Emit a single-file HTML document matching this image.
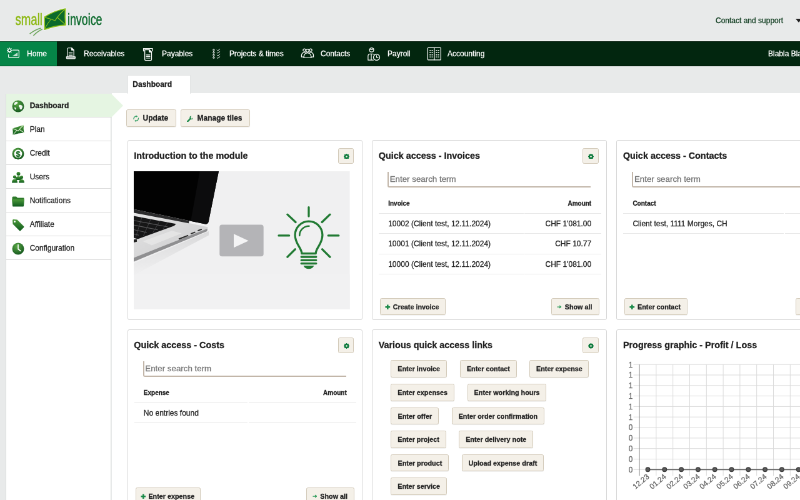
<!DOCTYPE html>
<html lang="en">
<head>
<meta charset="utf-8">
<title>smallinvoice - Dashboard</title>
<style>
html,body{margin:0;padding:0;}
body{width:800px;height:500px;overflow:hidden;background:#e8eaea;position:relative;font-family:"Liberation Sans",Arial,sans-serif;}
#stage{will-change:transform;-webkit-text-stroke:0.3px;position:absolute;left:0;top:0;width:1280px;height:800px;transform:scale(.625);transform-origin:0 0;overflow:hidden;background:#e8eaea;font-size:12px;color:#222;}
#stage *{box-sizing:border-box;}
.abs{position:absolute;}
/* header */
#support{position:absolute;left:1145px;top:25.7px;font-size:12px;color:#0d3a1d;white-space:nowrap;}
#caret{position:absolute;left:1272.5px;top:29.5px;width:0;height:0;border-left:5px solid transparent;border-right:5px solid transparent;border-top:6px solid #222;}
/* nav */
#nav{position:absolute;left:0;top:65.5px;width:1280px;height:40px;background:#02260f;box-shadow:0 -1px 0 #fff;}
#nav:after{content:"";box-sizing:border-box;position:absolute;left:0;top:0;width:100%;height:40px;border-top:1px solid rgba(0,10,0,.45);border-bottom:1px solid rgba(0,10,0,.4);pointer-events:none;}
#nav .it{position:absolute;top:0;height:40px;line-height:40px;color:#fff;font-size:12px;white-space:nowrap;}
#nav .it svg{position:absolute;top:9px;}
#nav .home{left:0;width:91px;background:#058547;}
#nav .it span{position:absolute;left:43px;top:0;}
/* sidebar */
#side{position:absolute;left:9.2px;top:150.2px;width:169.3px;height:660px;background:#fff;border:1px solid #d9dcdb;border-top:none;}
#side .row{position:absolute;left:0;width:167.3px;height:38px;border-bottom:1px solid #dadada;line-height:39.4px;font-size:12px;color:#222;}
#side .row span{position:absolute;left:37.5px;top:0;}
#side .row svg{position:absolute;left:7.5px;top:8.5px;}
#side .sel{background:#e5f5e2;font-weight:bold;width:169px;}
#arrow{position:absolute;left:178px;top:150.2px;width:0;height:0;border-top:19px solid transparent;border-bottom:19px solid transparent;border-left:19px solid #e5f5e2;}
/* main */
#main{position:absolute;left:178.5px;top:149px;width:1110px;height:660px;background:#fff;}
#tab{position:absolute;left:204px;top:119.500px;width:100.500px;height:30px;background:#fff;font-weight:bold;font-size:12px;line-height:29.500px;padding-left:7.300px;border:1px solid #e2e4e4;border-bottom:none;}
.btn{position:absolute;height:27.5px;background:#f4f0e8;border:1px solid #d2c9b8;border-radius:2.500px;font-weight:bold;font-size:10.8px;line-height:27px;white-space:nowrap;color:#222;box-shadow:0 1px 1px rgba(0,0,0,.06);}
.btn svg{position:absolute;}
.btn span{position:absolute;top:0;}
.tile{position:absolute;width:376px;height:287.500px;border:1px solid #d6d6d6;border-radius:3px;background:#fff;}
.tile h3{position:absolute;left:9.5px;top:16px;margin:0;font-size:14.4px;font-weight:bold;line-height:17px;white-space:nowrap;color:#222;}
.gear{position:absolute;left:336px;top:11.500px;width:25.600px;height:25.400px;background:#f4f0e8;border:1px solid #d2c9b8;border-radius:2.500px;}
.search{position:absolute;left:24px;top:50px;width:325px;height:25.2px;border-left:2px solid #c2b6a9;border-bottom:2px solid #c2b6a9;border-bottom-left-radius:3px;font-size:13.33px;color:#757575;line-height:23.500px;padding-left:1.500px;white-space:nowrap;}
.th{position:absolute;font-size:10px;font-weight:bold;top:95px;line-height:12px;}
.hl{position:absolute;height:1px;background:#e6e6e6;}
.td{position:absolute;font-size:12px;line-height:14px;white-space:nowrap;}
.r{text-align:right;}
.yl{position:absolute;width:20px;text-align:right;font-size:12px;line-height:14px;color:#666;}
.xl{position:absolute;width:40px;text-align:right;font-size:12px;line-height:14px;color:#666;white-space:nowrap;transform-origin:100% 50%;transform:rotate(-40deg);}
</style>
</head>
<body>
<div id="stage">
<!-- HEADER -->
<svg class="abs" style="left:0;top:0" width="200" height="65" viewBox="0 0 200 65">
<g font-family="Liberation Sans, Arial, sans-serif" font-size="26.500" stroke-width=".5">
<text x="24.500" y="40.300" fill="#8cb811" stroke="#8cb811" textLength="43.500" lengthAdjust="spacingAndGlyphs">small</text>
<text x="108" y="40.300" fill="#0b6a2c" stroke="#0b6a2c" textLength="55.500" lengthAdjust="spacingAndGlyphs">invoice</text>
</g>
<path d="M71.200,27.300 Q86,17.500 104.500,14 Q103.500,27 105,39.800 Q87,41 71.300,47.200 Z" fill="#fff" stroke="#fff" stroke-width="3.500" stroke-linejoin="round" opacity=".55"/>
<path d="M71.200,27.300 Q86,17.500 104.500,14 Q103.500,27 105,39.800 Q87,41 71.300,47.200 Z" fill="#0b6a2c" stroke="#8cc01a" stroke-width="1.700" stroke-linejoin="round"/>
<path d="M71.500,27.800 Q80,29.500 88,33 Q95,22 104.300,14.500" fill="none" stroke="#8cc01a" stroke-width="1.300"/>
<path d="M71.500,46.800 Q76,37 82,30.500 M104.800,39.500 Q98,33.500 92,28" fill="none" stroke="#8cc01a" stroke-width="1.100"/>
<path d="M47.600,54.200 Q56,47.500 65.500,45" fill="none" stroke="#4f9438" stroke-width="1.700" opacity=".8"/>
<path d="M53.400,57 Q60,50 67.700,46.700" fill="none" stroke="#4f9438" stroke-width="1.700" opacity=".8"/>
</svg>
<div id="support">Contact and support</div><div id="caret"></div>
<!-- NAV -->
<div id="nav"><div class="it home" style="left:0px;width:91px"><svg style="left:10.500px;top:10.300px" width="21.600" height="19.800" viewBox="0 0 24 22"><g stroke="#fff" fill="none" stroke-width="1.3" stroke-linecap="round" stroke-linejoin="round"><circle cx="4.700" cy="5" r="2.700" stroke-width="1.500"/><circle cx="4.700" cy="5" r="0.900" fill="#03260f" stroke="none"/><path d="M4.700,0.500v1.200M4.700,8.300v1.200M0.200,5h1.200M8,5h1.200M1.500,1.800l.9,.9M7,7.300l.9,.9M1.500,8.200l.9,-.9M7,2.700l.9,-.9" stroke-width="1.200"/><path d="M10.500,4.500h9.500q1.500,0 1.500,1.500v10.500q0,1.500 -1.500,1.500h-15.500q-1.500,0 -1.500,-1.500v-4"/><path d="M9.500,15.500h9.500v-6.500z" fill="#fff" stroke="none" opacity=".75"/></g></svg><span>Home</span></div><div class="it " style="left:91px;width:125px"><svg style="left:13.700px;top:9.700px" width="17.500" height="21" viewBox="0 0 20 24"><g stroke="#fff" fill="none" stroke-width="1.3" stroke-linecap="round" stroke-linejoin="round" stroke-width="1.450"><path d="M3.500,18v-14.500q0,-1.500 1.500,-1.500h6l4,4v12"/><path d="M11,2v4h4z" fill="#fff"/><path d="M6,10.500h6.500M6,13h6.500M6,15.500h6.500" stroke-width="1.200"/><path d="M1.500,18h16v2.500q0,1 -1,1h-14q-1,0 -1,-1z" fill="#fff" fill-opacity=".6"/></g></svg><span>Receivables</span></div><div class="it " style="left:216px;width:108px"><svg style="left:11.400px;top:9px" width="20.600" height="24.700" viewBox="0 0 20 24"><g stroke="#fff" fill="none" stroke-width="1.3" stroke-linecap="round" stroke-linejoin="round"><path d="M2.500,6.500v-4h14v4" /><path d="M4.500,4.500v15q0,1.500 1.500,1.500h7.500q1.500,0 1.500,-1.500v-11.500l-3.500,-3.500z"/><path d="M11.500,4.500v3.500h3.500z" fill="#fff"/><path d="M7,12.500h5.500M7,15h5.500M7,17.500h5.500" stroke-width="1.100"/></g></svg><span>Payables</span></div><div class="it " style="left:324px;width:146px"><svg style="left:15.500px;top:12px" width="14" height="16.500" viewBox="0 0 14 16.500"><g stroke="#fff" fill="none" stroke-linecap="round" stroke-linejoin="round" stroke-width=".9"><rect x=".7" y=".7" width="2.600" height="2.300" rx=".8"/><rect x=".7" y="4.800" width="2.600" height="2.300" rx=".8"/><rect x=".7" y="8.900" width="2.600" height="2.300" rx=".8"/><rect x=".7" y="13" width="2.600" height="2.300" rx=".8"/><path d="M7.200,2l1.200,1.200l3.400,-2.800M7.200,6.100l1.200,1.200l3.400,-2.800M7.200,10.200l1.200,1.200l3.400,-2.800M7.200,14.300l1.200,1.200l3.400,-2.800" stroke-width="1"/></g></svg><span>Projects &amp; times</span></div><div class="it " style="left:470px;width:107px"><svg style="left:11px;top:10.500px" width="22" height="18.400" viewBox="0 0 24 20"><g stroke="#fff" fill="none" stroke-width="1.3" stroke-linecap="round" stroke-linejoin="round" stroke-width="1.200"><circle cx="6.500" cy="4.500" r="2.300"/><circle cx="17.500" cy="4.500" r="2.300"/><path d="M1.500,16.500q-0.500,-8 5,-8q2,0 3,1.500M22.500,16.500q0.500,-8 -5,-8q-2,0 -3,1.500M1.500,16.500h4M22.500,16.500h-4"/><circle cx="12" cy="5.500" r="2.600"/><path d="M5.500,18q0,-8.500 6.500,-8.500q6.500,0 6.500,8.500z"/></g></svg><span>Contacts</span></div><div class="it " style="left:577px;width:96px"><svg style="left:10.200px;top:9.300px" width="22.600" height="23.400" viewBox="0 0 24 26" preserveAspectRatio="none"><g stroke="#fff" fill="none" stroke-width="1.3" stroke-linecap="round" stroke-linejoin="round" stroke-width="1.200"><circle cx="8" cy="5.500" r="3.600"/><path d="M4.500,4.500q3.500,1 7,-1"/><path d="M2,23.500v-7q0,-4 4,-4h3.500q2,0 3,1.500M2,23.500h9M7.500,12.500v11"/><circle cx="16.500" cy="18.500" r="5.300"/><path d="M16.500,15.500v3.200h2.600"/></g></svg><span>Payroll</span></div><div class="it " style="left:673px;width:120px"><svg style="left:9.600px;top:8.600px" width="24.700" height="24.700" viewBox="0 0 26 26"><g stroke="#fff" fill="none" stroke-width="1.3" stroke-linecap="round" stroke-linejoin="round" stroke-width="1.200"><rect x="1.500" y="2.500" width="22" height="20.500" rx="1"/><path d="M12.500,2.500v20.500"/><g stroke-width="1.500" stroke-linecap="butt"><path d="M4.500,7h2.200M8,7h2.200M4.500,10.500h2.200M8,10.500h2.200M4.500,14.500h2.200M8,14.500h2.200M4.500,18h2.200M8,18h2.200M15,7h2.200M18.500,7h2.200M15,10.500h2.200M18.500,10.500h2.200M15,14.500h2.200M18.500,14.500h2.200M15,18h2.200M18.500,18h2.200"/></g></g></svg><span>Accounting</span></div><div class="it" style="left:1229px;width:60px"><span style="left:0">Blabla Blabla</span></div></div>
<!-- MAIN -->
<div id="main"></div>
<div id="tab">Dashboard</div>
<svg width="0" height="0" style="position:absolute"><defs>
<linearGradient id="gg" x1="0" y1="0" x2="0" y2="1"><stop offset="0" stop-color="#4c9a3a"/><stop offset="1" stop-color="#0f5a1e"/></linearGradient>
<radialGradient id="gr" cx=".4" cy=".3" r=".8"><stop offset="0" stop-color="#5aa845"/><stop offset="1" stop-color="#0d4f1a"/></radialGradient>
</defs></svg><div id="side"><div class="row sel" style="top:0px"><svg width="22" height="22" viewBox="0 0 22 22"><circle cx="11" cy="11" r="9.500" fill="url(#gr)"/><path d="M6,4.500q3,-1.500 4.500,0.500q-0.500,2 -2.500,2.500q-1,2 -3,1.500q-1,-2.500 1,-4.500zM12.500,9q3,-1 5.500,1.500q0.500,3 -1.500,5.500q-2.500,1 -3,-1.500q0.500,-2 -1.500,-3q-0.500,-1.500 0.500,-2.500zM5,12.500q2,0 3,2q0,2 -1.500,2q-1.500,-1.500 -1.500,-4z" fill="#fff" opacity=".92"/></svg><span>Dashboard</span></div><div class="row " style="top:38px"><svg width="22" height="22" viewBox="0 0 22 22"><path d="M2,8.500l18,-5.500q-1,6.500 0.500,12.500q-9,0 -18,3.500q0.500,-5.500 -0.500,-10.500z" fill="url(#gg)"/><path d="M2,8.500q5,1.500 9,4q4,-5.500 9,-9.500M2.500,19l6.500,-7.500M20.500,15.500l-7,-5" stroke="#dff0d0" stroke-width="1.100" fill="none"/></svg><span>Plan</span></div><div class="row " style="top:76px"><svg width="22" height="22" viewBox="0 0 22 22"><circle cx="11" cy="11" r="9.500" fill="url(#gr)"/><circle cx="11" cy="11" r="6.400" fill="#fff"/><text x="11" y="15.600" text-anchor="middle" font-family="Liberation Sans, Arial, sans-serif" font-weight="bold" font-size="12.500" fill="#1c6a26" stroke="#1c6a26" stroke-width=".4">$</text></svg><span>Credit</span></div><div class="row " style="top:114px"><svg width="22" height="22" viewBox="0 0 22 22"><g fill="url(#gg)"><circle cx="11.500" cy="5" r="3"/><path d="M6.500,15q0,-6 5,-6q5,0 5,6z"/><circle cx="5.500" cy="10" r="2.600"/><path d="M1,19.500q0,-6 4.500,-6q4.500,0 4.500,6z"/><circle cx="16.500" cy="10.500" r="2.600"/><path d="M12,19.500q0,-5.500 4.500,-5.500q4.500,0 4.500,5.500z"/></g></svg><span>Users</span></div><div class="row " style="top:152px"><svg width="22" height="22" viewBox="0 0 22 22"><path d="M1.500,5q0,-1.500 1.500,-1.500h5l2,2h9.500q1,0 1,1v2h-19z" fill="#2d7a2a"/><path d="M1,8h20l-1,10.500q0,1 -1,1h-16q-1,0 -1,-1z" fill="url(#gg)"/></svg><span>Notifications</span></div><div class="row " style="top:190px"><svg width="22" height="22" viewBox="0 0 22 22"><path d="M2,3.500q0,-1.500 1.500,-1.500l6,0.500l10.500,10.500q1,1 0,2l-5,5q-1,1 -2,0l-10.500,-10.500z" fill="url(#gg)"/><circle cx="5.500" cy="5.500" r="1.500" fill="#fff"/></svg><span>Affiliate</span></div><div class="row " style="top:228px"><svg width="22" height="22" viewBox="0 0 22 22"><circle cx="11" cy="11" r="9.500" fill="url(#gr)"/><path d="M11,4.500v7l4,3" stroke="#fff" stroke-width="1.600" fill="none" stroke-linecap="round"/></svg><span>Configuration</span></div></div>
<div id="arrow"></div>
<div class="btn" style="left:202px;top:175px;width:80px;font-size:12px"><svg style="left:8.500px;top:8px" width="11.500" height="11.500" viewBox="0 0 12 12"><g fill="none" stroke="#35a066" stroke-width="1.350"><path d="M2.200,7.300a3.900,3.900 0 0 1 4.300,-5"/><path d="M9.800,4.700a3.900,3.900 0 0 1 -4.300,5"/></g><path d="M5.800,0.300l3,2.100l-3.100,1.700z M6.200,11.700l-3,-2.100l3.100,-1.700z" fill="#35a066"/></svg><span style="left:25.500px">Update</span></div>
<div class="btn" style="left:289px;top:175px;width:110.500px;font-size:12px"><svg style="left:9px;top:8.500px" width="10.500" height="10.500" viewBox="0 0 12 12"><path d="M1.400,10.600l5,-5" stroke="#1c8a4a" stroke-width="2.800" stroke-linecap="round"/><path d="M8.300,0.600a3.200,3.200 0 1 0 3.100,3.100l-1.900,1.900l-1.900,-0.600l-0.600,-1.900z" fill="#1c8a4a"/></svg><span style="left:25.500px">Manage tiles</span></div>
<div class="tile" style="left:203.8px;top:224.3px"><h3>Introduction to the module</h3><div class="gear"><svg style="position:absolute;left:8px;top:8px" width="9" height="9" viewBox="0 0 10 10"><circle cx="5" cy="5" r="3" fill="none" stroke="#0c7a3c" stroke-width="2.600"/><g stroke="#0c7a3c" stroke-width="1.600"><path d="M5,0v10M0,5h10M1.460,1.460l7.080,7.080M8.540,1.460l-7.080,7.080"/></g><circle cx="5" cy="5" r="1.500" fill="#f4f0e8"/></svg></div><svg id="vid" style="position:absolute;left:9.4px;top:48.700px" width="345.600" height="221" viewBox="0 0 216 138.100" preserveAspectRatio="none">
<defs>
<linearGradient id="deck" x1="0" y1="0" x2="1" y2="1"><stop offset="0" stop-color="#e4e4e4"/><stop offset="1" stop-color="#c9c9cb"/></linearGradient>
<linearGradient id="shd" x1="0" y1="0" x2="0" y2="1"><stop offset="0" stop-color="#d9d9da"/><stop offset="1" stop-color="#f0f0f1"/></linearGradient>
</defs>
<rect width="216" height="138.100" fill="#f0f0f1"/>
<rect y="103" width="216" height="35.100" fill="#f1f1f2"/>
<path d="M0,92 L75,60 L75,64 L30,88 L0,104z" fill="url(#shd)"/>
<path d="M0,42 L56,52 L74,55.800 L73.500,59.300 L0,89.500z" fill="url(#deck)"/>
<path d="M0,86.500 L73.800,57.300 L73.300,60 L0,90.500z" fill="#8f8f91"/>
<path d="M0,44.700 L42.300,52.600 L40.500,54.500 L4,67.800 L0,66.500z" fill="#161617"/>
<path d="M0,49.200 L34,55.600 M0,53.800 L24,58.500 M0,58.400 L13,61.200 M0,62.800 L5,63.900" stroke="#5a5a5c" stroke-width=".7" fill="none"/>
<path d="M8,46.300 L2,66 M17,48 L9.500,65 M26,49.700 L19,61.500 M34,51.200 L29,58" stroke="#4a4a4c" stroke-width=".5" fill="none"/>
<path d="M0,68.200 L3,67.800 L3.200,70.500 L0,71.200z" fill="#222"/>
<path d="M9,70 L38,59.500 L48,62 L18,74z" fill="#e9e9ea" opacity=".7"/>
<path d="M45,67.800l9.500,-3.700 M57,62.600l4.500,-1.700 M64,59.500l4,-1.500" stroke="#2a2a2a" stroke-width="1.200"/>
<path d="M0,0 L85,0 L74.800,50.500 Q74,53.300 71.500,52.800 L55.500,49.500 L0,38z" fill="#020202"/>
<path d="M66,0 L85,0 L74.800,50.500 Q74,53.300 71.500,52.800 L57,49.800z" fill="#0c0c0d"/>
<path d="M0,38 L55.500,49.500 L55,52 L0,41.500z" fill="#2b2b2c"/>
<rect x="85.800" y="53.500" width="44" height="31.700" rx="2.500" fill="#b4b4b7"/>
<path d="M100,62.600 L100,76.400 L114.800,69.500z" fill="#f4f4f5"/>
<g fill="none" stroke="#217a33" stroke-width="2.050" stroke-linecap="round" transform="translate(0,.5)">
<path d="M168,81.800 C168,76 161.300,72.500 161.300,63.300 A13.700,13.700 0 1 1 188.700,63.300 C188.700,72.500 182,76 182,81.800 Z" stroke-linejoin="round"/>
<path d="M165.800,63.800 A9.300,9.300 0 0 1 175.300,54.300" stroke-width="1.600"/>
<path d="M167.600,85.100h14.800M167.600,88.400h14.800M167.600,91.700h14.800"/><path d="M170.500,94.300h9q-1,2.300 -4.500,2.300q-3.500,0 -4.500,-2.300z" fill="#217a33" stroke-width="1"/>
<path d="M175,35.500v9M145,63.800h10.400M194.500,63.800h10.400M153.700,42.700l8.200,7.700M196.200,42.700l-8,7.700M153.700,85.200l7.700,-7.700M196.200,85.200l-7.700,-7.700"/>
</g>
</svg></div>
<div class="tile" style="left:595.2px;top:224.3px"><h3>Quick access - Invoices</h3><div class="gear"><svg style="position:absolute;left:8px;top:8px" width="9" height="9" viewBox="0 0 10 10"><circle cx="5" cy="5" r="3" fill="none" stroke="#0c7a3c" stroke-width="2.600"/><g stroke="#0c7a3c" stroke-width="1.600"><path d="M5,0v10M0,5h10M1.460,1.460l7.080,7.080M8.540,1.460l-7.080,7.080"/></g><circle cx="5" cy="5" r="1.500" fill="#f4f0e8"/></svg></div><div class="search">Enter search term</div><div class="th" style="left:25px">Invoice</div><div class="th r" style="right:24px">Amount</div><div class="hl" style="left:10px;width:231.500px;top:115.5px"></div><div class="hl" style="left:243px;width:122.500px;top:115.5px"></div><div class="hl" style="left:10px;width:231.500px;top:148.0px"></div><div class="hl" style="left:243px;width:122.500px;top:148.0px"></div><div class="hl" style="left:10px;width:231.500px;top:180.5px"></div><div class="hl" style="left:243px;width:122.500px;top:180.5px"></div><div class="hl" style="left:10px;width:231.500px;top:213.0px"></div><div class="hl" style="left:243px;width:122.500px;top:213.0px"></div><div class="td" style="left:25px;top:125.7px">10002 (Client test, 12.11.2024)</div><div class="td r" style="right:24px;top:125.7px">CHF 1'081.00</div><div class="td" style="left:25px;top:158.2px">10001 (Client test, 12.11.2024)</div><div class="td r" style="right:24px;top:158.2px">CHF 10.77</div><div class="td" style="left:25px;top:190.7px">10000 (Client test, 12.11.2024)</div><div class="td r" style="right:24px;top:190.7px">CHF 1'081.00</div><div class="btn" style="left:12px;top:251.5px;width:105px"><svg style="left:6.800px;top:9px" width="8.600" height="8.600" viewBox="0 0 10 10"><path d="M5,0.500v9M0.500,5h9" stroke="#1a8a48" stroke-width="2.900"/></svg><span style="left:19.600px">Create invoice</span></div><div class="btn" style="left:285.500px;top:251.500px;width:77px"><svg style="left:8.500px;top:10.300px" width="7.500" height="6" viewBox="0 0 9 7"><path d="M0.500,3.500h7M5,1l2.800,2.500l-2.800,2.500" stroke="#2a9a58" stroke-width="1.500" fill="none"/></svg><span style="left:21px">Show all</span></div></div>
<div class="tile" style="left:986.4px;top:224.3px"><h3>Quick access - Contacts</h3><div class="gear"><svg style="position:absolute;left:8px;top:8px" width="9" height="9" viewBox="0 0 10 10"><circle cx="5" cy="5" r="3" fill="none" stroke="#0c7a3c" stroke-width="2.600"/><g stroke="#0c7a3c" stroke-width="1.600"><path d="M5,0v10M0,5h10M1.460,1.460l7.080,7.080M8.540,1.460l-7.080,7.080"/></g><circle cx="5" cy="5" r="1.500" fill="#f4f0e8"/></svg></div><div class="search">Enter search term</div><div class="th" style="left:25px">Contact</div><div class="hl" style="left:10px;width:256.6px;top:115.5px"></div><div class="hl" style="left:268.6px;width:96.9px;top:115.5px"></div><div class="hl" style="left:10px;width:256.6px;top:148.0px"></div><div class="hl" style="left:268.6px;width:96.9px;top:148.0px"></div><div class="td" style="left:25px;top:125.7px">Client test, 1111 Morges, CH</div><div class="btn" style="left:12px;top:251.5px;width:101px"><svg style="left:6.800px;top:9px" width="8.600" height="8.600" viewBox="0 0 10 10"><path d="M5,0.500v9M0.500,5h9" stroke="#1a8a48" stroke-width="2.900"/></svg><span style="left:19.600px">Enter contact</span></div><div class="btn" style="left:285.500px;top:251.500px;width:77px"><svg style="left:8.500px;top:10.300px" width="7.500" height="6" viewBox="0 0 9 7"><path d="M0.500,3.500h7M5,1l2.800,2.500l-2.800,2.500" stroke="#2a9a58" stroke-width="1.500" fill="none"/></svg><span style="left:21px">Show all</span></div></div>
<div class="tile" style="left:203.8px;top:527.2px"><h3>Quick access - Costs</h3><div class="gear"><svg style="position:absolute;left:8px;top:8px" width="9" height="9" viewBox="0 0 10 10"><circle cx="5" cy="5" r="3" fill="none" stroke="#0c7a3c" stroke-width="2.600"/><g stroke="#0c7a3c" stroke-width="1.600"><path d="M5,0v10M0,5h10M1.460,1.460l7.080,7.080M8.540,1.460l-7.080,7.080"/></g><circle cx="5" cy="5" r="1.500" fill="#f4f0e8"/></svg></div><div class="search">Enter search term</div><div class="th" style="left:25px">Expense</div><div class="th r" style="right:24px">Amount</div><div class="hl" style="left:10px;width:180.8px;top:115.5px"></div><div class="hl" style="left:192.8px;width:172.7px;top:115.5px"></div><div class="hl" style="left:10px;width:180.8px;top:148.0px"></div><div class="hl" style="left:192.8px;width:172.7px;top:148.0px"></div><div class="td" style="left:25px;top:125.7px">No entries found</div><div class="btn" style="left:12px;top:251.5px;width:104px"><svg style="left:6.800px;top:9px" width="8.600" height="8.600" viewBox="0 0 10 10"><path d="M5,0.500v9M0.500,5h9" stroke="#1a8a48" stroke-width="2.900"/></svg><span style="left:19.600px">Enter expense</span></div><div class="btn" style="left:285.500px;top:251.500px;width:77px"><svg style="left:8.500px;top:10.300px" width="7.500" height="6" viewBox="0 0 9 7"><path d="M0.500,3.500h7M5,1l2.800,2.500l-2.800,2.500" stroke="#2a9a58" stroke-width="1.500" fill="none"/></svg><span style="left:21px">Show all</span></div></div>
<div class="tile" style="left:595.2px;top:527.2px"><h3>Various quick access links</h3><div class="gear"><svg style="position:absolute;left:8px;top:8px" width="9" height="9" viewBox="0 0 10 10"><circle cx="5" cy="5" r="3" fill="none" stroke="#0c7a3c" stroke-width="2.600"/><g stroke="#0c7a3c" stroke-width="1.600"><path d="M5,0v10M0,5h10M1.460,1.460l7.080,7.080M8.540,1.460l-7.080,7.080"/></g><circle cx="5" cy="5" r="1.500" fill="#f4f0e8"/></svg></div><div class="btn" style="left:29.3px;top:48.3px;width:89.3px;text-align:center">Enter invoice</div><div class="btn" style="left:140.0px;top:48.3px;width:90.4px;text-align:center">Enter contact</div><div class="btn" style="left:251.2px;top:48.3px;width:95.1px;text-align:center">Enter expense</div><div class="btn" style="left:29.3px;top:85.9px;width:101.4px;text-align:center">Enter expenses</div><div class="btn" style="left:151.5px;top:85.9px;width:126.8px;text-align:center">Enter working hours</div><div class="btn" style="left:29.3px;top:123.5px;width:76.7px;text-align:center">Enter offer</div><div class="btn" style="left:126.7px;top:123.5px;width:148.1px;text-align:center">Enter order confirmation</div><div class="btn" style="left:29.3px;top:161.1px;width:88.2px;text-align:center">Enter project</div><div class="btn" style="left:138.2px;top:161.1px;width:118.8px;text-align:center">Enter delivery note</div><div class="btn" style="left:29.3px;top:198.7px;width:92.8px;text-align:center">Enter product</div><div class="btn" style="left:142.8px;top:198.7px;width:130.9px;text-align:center">Upload expense draft</div><div class="btn" style="left:29.3px;top:236.3px;width:89.3px;text-align:center">Enter service</div></div>
<div class="tile" style="left:986.4px;top:527.2px"><h3>Progress graphic - Profit / Loss</h3><svg id="chart" style="position:absolute;left:0;top:0" width="320" height="285" viewBox="0 0 320 285"><g shape-rendering="auto"><path d="M26.6,55.2H320" stroke="#dadada" stroke-width="1"/><path d="M26.6,72.0H320" stroke="#dadada" stroke-width="1"/><path d="M26.6,88.8H320" stroke="#dadada" stroke-width="1"/><path d="M26.6,105.6H320" stroke="#dadada" stroke-width="1"/><path d="M26.6,122.4H320" stroke="#dadada" stroke-width="1"/><path d="M26.6,139.2H320" stroke="#dadada" stroke-width="1"/><path d="M26.6,156.1H320" stroke="#dadada" stroke-width="1"/><path d="M26.6,172.9H320" stroke="#dadada" stroke-width="1"/><path d="M26.6,189.7H320" stroke="#dadada" stroke-width="1"/><path d="M26.6,206.5H320" stroke="#dadada" stroke-width="1"/><path d="M26.6,223.3H320" stroke="#dadada" stroke-width="1"/><path d="M36.1,55.2V233.3" stroke="#8c8c8c" stroke-width="1"/><path d="M62.9,55.2V233.3" stroke="#dadada" stroke-width="1"/><path d="M89.7,55.2V233.3" stroke="#dadada" stroke-width="1"/><path d="M116.5,55.2V233.3" stroke="#dadada" stroke-width="1"/><path d="M143.3,55.2V233.3" stroke="#dadada" stroke-width="1"/><path d="M170.1,55.2V233.3" stroke="#dadada" stroke-width="1"/><path d="M196.9,55.2V233.3" stroke="#dadada" stroke-width="1"/><path d="M223.7,55.2V233.3" stroke="#dadada" stroke-width="1"/><path d="M250.5,55.2V233.3" stroke="#dadada" stroke-width="1"/><path d="M277.3,55.2V233.3" stroke="#dadada" stroke-width="1"/><path d="M304.1,55.2V233.3" stroke="#dadada" stroke-width="1"/><path d="M330.9,55.2V233.3" stroke="#dadada" stroke-width="1"/></g><path d="M49.5,223.3H320" stroke="#686868" stroke-width="1.900"/><circle cx="49.5" cy="223.3" r="3.300" fill="#595959" stroke="#3c3c3c" stroke-width="1.300"/><circle cx="76.3" cy="223.3" r="3.300" fill="#595959" stroke="#3c3c3c" stroke-width="1.300"/><circle cx="103.1" cy="223.3" r="3.300" fill="#595959" stroke="#3c3c3c" stroke-width="1.300"/><circle cx="129.9" cy="223.3" r="3.300" fill="#595959" stroke="#3c3c3c" stroke-width="1.300"/><circle cx="156.7" cy="223.3" r="3.300" fill="#595959" stroke="#3c3c3c" stroke-width="1.300"/><circle cx="183.5" cy="223.3" r="3.300" fill="#595959" stroke="#3c3c3c" stroke-width="1.300"/><circle cx="210.3" cy="223.3" r="3.300" fill="#595959" stroke="#3c3c3c" stroke-width="1.300"/><circle cx="237.1" cy="223.3" r="3.300" fill="#595959" stroke="#3c3c3c" stroke-width="1.300"/><circle cx="263.9" cy="223.3" r="3.300" fill="#595959" stroke="#3c3c3c" stroke-width="1.300"/><circle cx="290.7" cy="223.3" r="3.300" fill="#595959" stroke="#3c3c3c" stroke-width="1.300"/><circle cx="317.5" cy="223.3" r="3.300" fill="#595959" stroke="#3c3c3c" stroke-width="1.300"/><circle cx="344.3" cy="223.3" r="3.300" fill="#595959" stroke="#3c3c3c" stroke-width="1.300"/></svg><div class="yl" style="left:5.1px;top:48.4px">1</div><div class="yl" style="left:5.1px;top:65.2px">1</div><div class="yl" style="left:5.1px;top:82.0px">1</div><div class="yl" style="left:5.1px;top:98.8px">1</div><div class="yl" style="left:5.1px;top:115.6px">1</div><div class="yl" style="left:5.1px;top:132.4px">1</div><div class="yl" style="left:5.1px;top:149.3px">0</div><div class="yl" style="left:5.1px;top:166.1px">0</div><div class="yl" style="left:5.1px;top:182.9px">0</div><div class="yl" style="left:5.1px;top:199.7px">0</div><div class="yl" style="left:5.1px;top:216.5px">0</div><div class="xl" style="left:9.9px;top:225.5px">12.23</div><div class="xl" style="left:36.7px;top:225.5px">01.24</div><div class="xl" style="left:63.5px;top:225.5px">02.24</div><div class="xl" style="left:90.3px;top:225.5px">03.24</div><div class="xl" style="left:117.1px;top:225.5px">04.24</div><div class="xl" style="left:143.9px;top:225.5px">05.24</div><div class="xl" style="left:170.7px;top:225.5px">06.24</div><div class="xl" style="left:197.5px;top:225.5px">07.24</div><div class="xl" style="left:224.3px;top:225.5px">08.24</div><div class="xl" style="left:251.1px;top:225.5px">09.24</div><div class="xl" style="left:277.9px;top:225.5px">10.24</div><div class="xl" style="left:304.7px;top:225.5px">11.24</div></div>
</div>
</body>
</html>
